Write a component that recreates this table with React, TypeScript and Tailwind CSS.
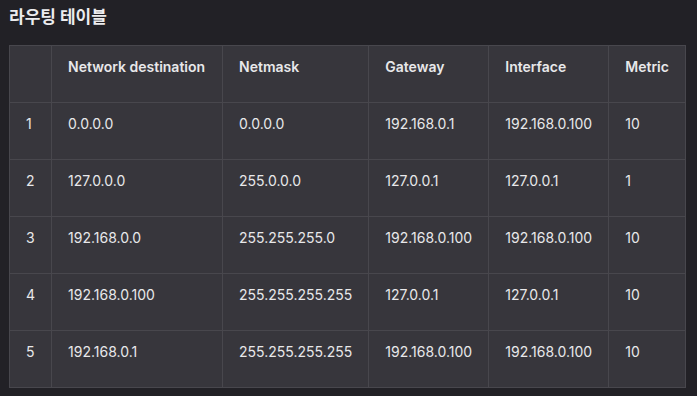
const headers = ["", "Network destination", "Netmask", "Gateway", "Interface", "Metric"];

const rows = [
  ["1", "0.0.0.0", "0.0.0.0", "192.168.0.1", "192.168.0.100", "10"],
  ["2", "127.0.0.0", "255.0.0.0", "127.0.0.1", "127.0.0.1", "1"],
  ["3", "192.168.0.0", "255.255.255.0", "192.168.0.100", "192.168.0.100", "10"],
  ["4", "192.168.0.100", "255.255.255.255", "127.0.0.1", "127.0.0.1", "10"],
  ["5", "192.168.0.1", "255.255.255.255", "192.168.0.100", "192.168.0.100", "10"],
];

const widths = ["w-[42px]", "w-[171px]", "w-[145px]", "w-[120px]", "w-[120px]", "w-[77px]"];

export default function App() {
  return (
    <div
      className="w-[697px] h-[396px] bg-[#222126] text-[#e8e8ea] px-[9px] pt-[5px]"
      style={{ fontFamily: 'Inter, "Noto Sans CJK KR", sans-serif' }}
    >
      <h1 className="text-[17px] font-bold leading-[25px] h-[40px] text-[#ececee]">
        라우팅 테이블
      </h1>
      <table className="border-collapse bg-[#37363c] text-[14px] leading-[20px] table-fixed">
        <thead>
          <tr>
            {headers.map((h, i) => (
              <th
                key={i}
                className={`${widths[i]} h-[57px] border border-[#48474d] px-4 pt-[11px] align-top text-left font-semibold`}
              >
                {h}
              </th>
            ))}
          </tr>
        </thead>
        <tbody>
          {rows.map((r, ri) => (
            <tr key={ri}>
              {r.map((c, ci) => (
                <td
                  key={ci}
                  className={`${widths[ci]} h-[57px] border border-[#48474d] px-4 pt-[11px] align-top`}
                >
                  {c}
                </td>
              ))}
            </tr>
          ))}
        </tbody>
      </table>
    </div>
  );
}
